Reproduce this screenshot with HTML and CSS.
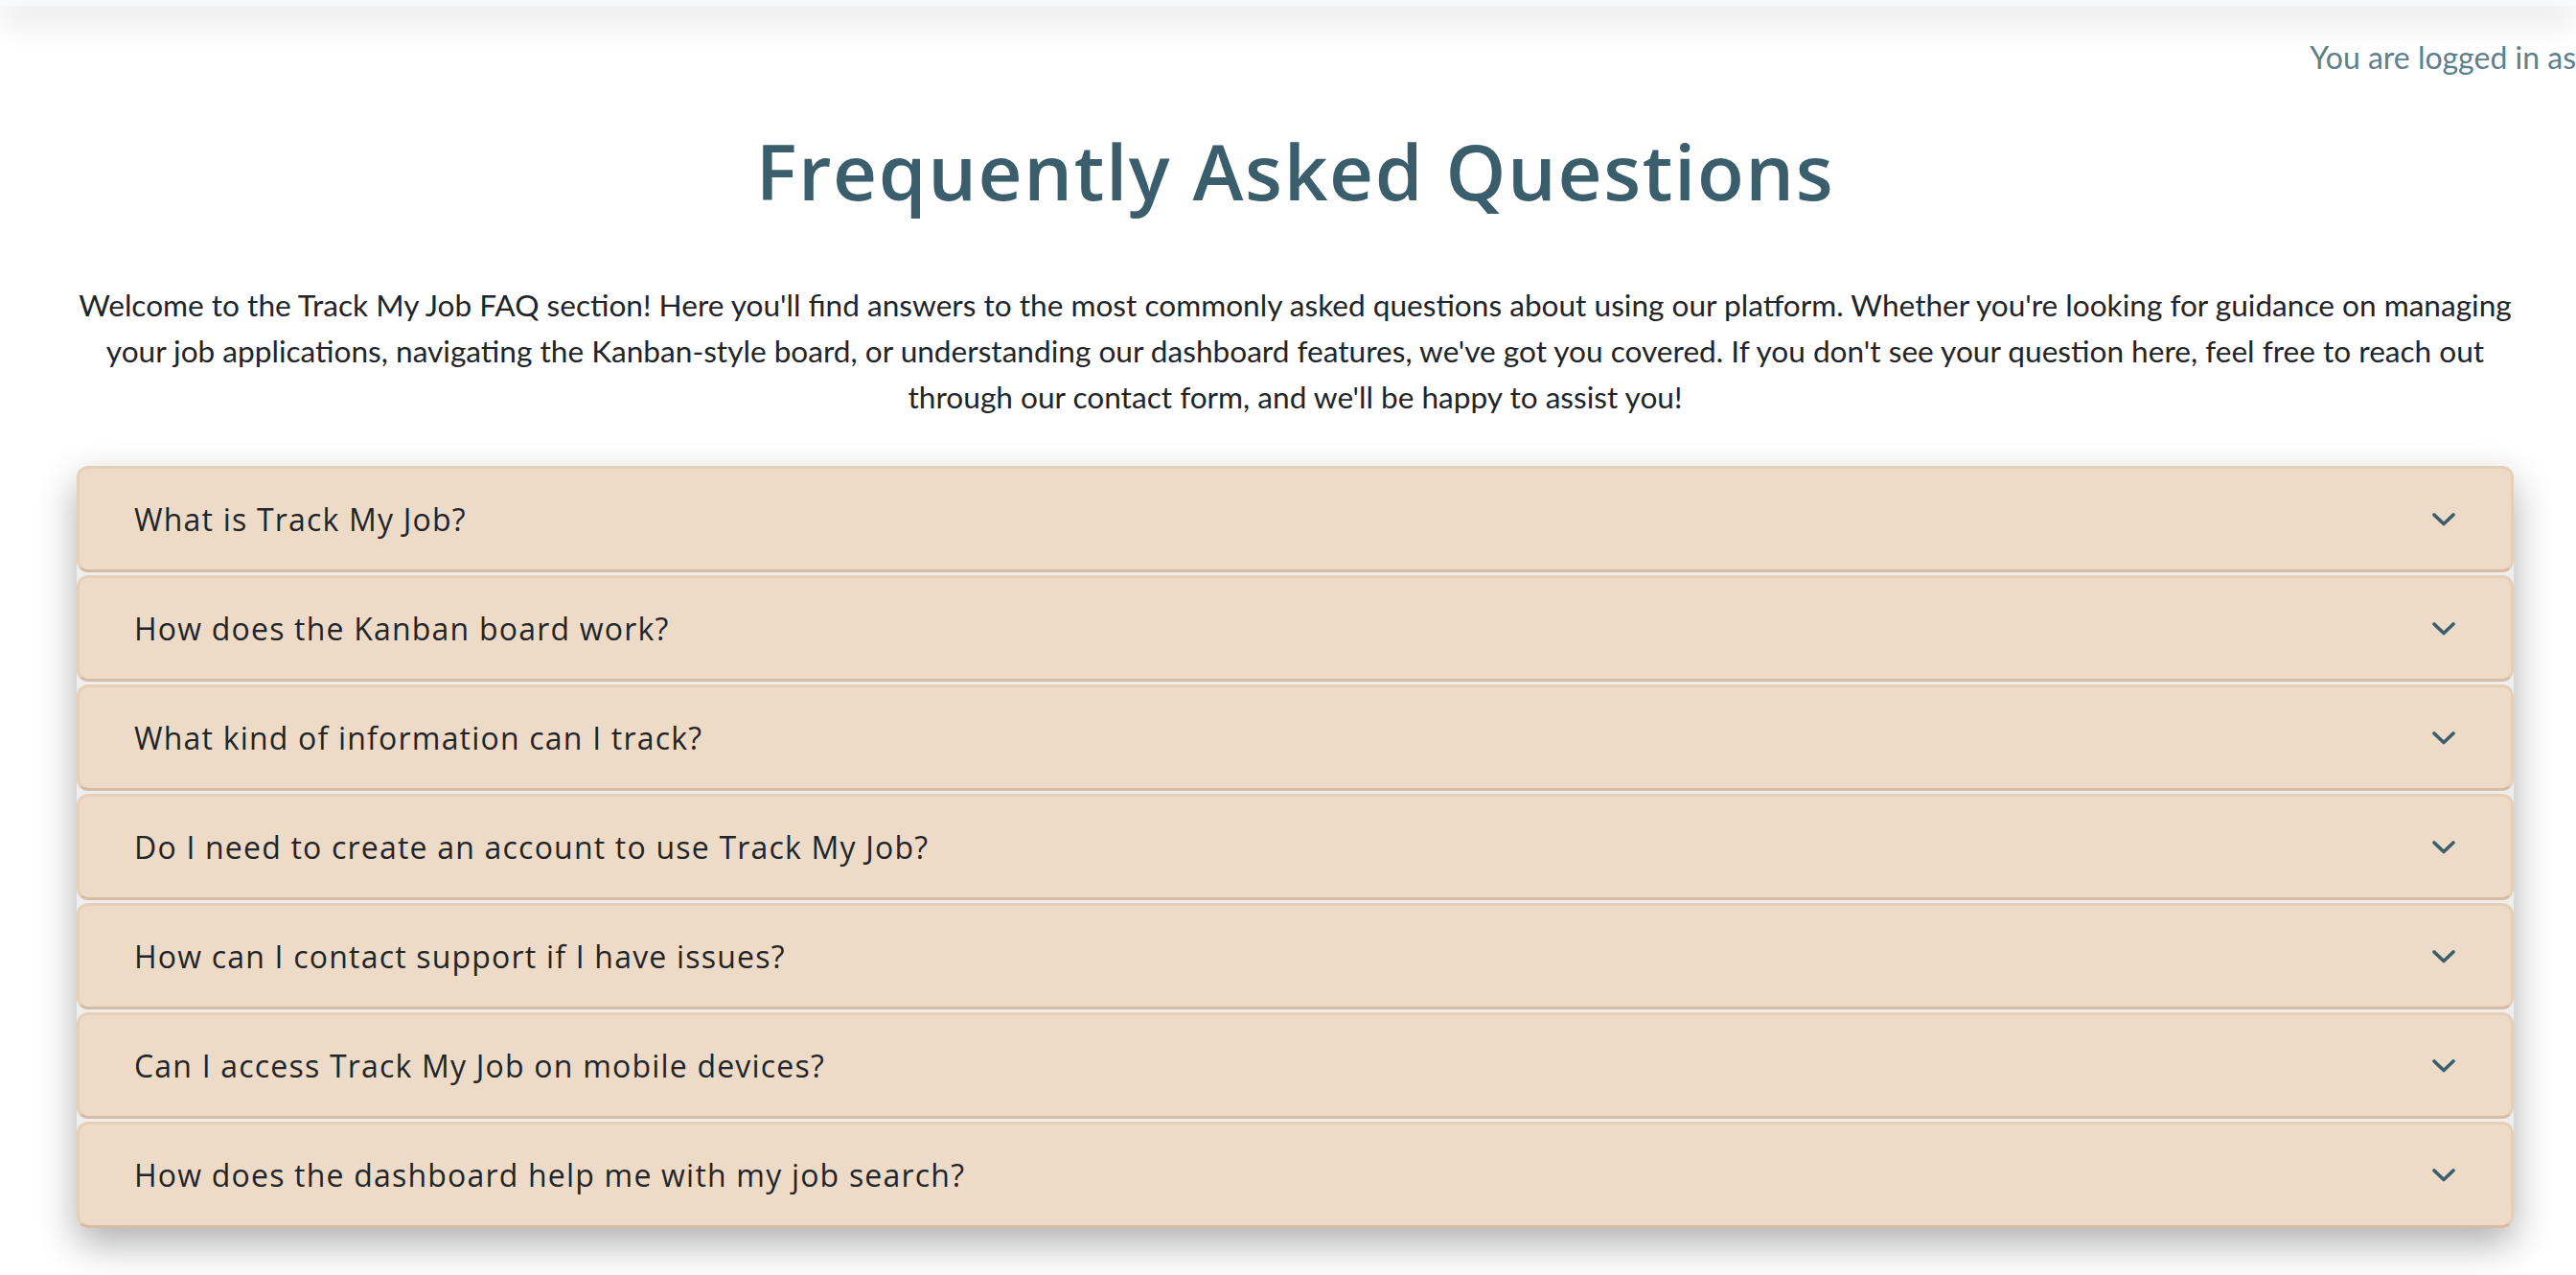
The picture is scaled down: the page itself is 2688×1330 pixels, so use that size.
FILE: index.html
```html
<!DOCTYPE html>
<html lang="en">
<head>
<meta charset="utf-8">
<title>FAQ - Track My Job</title>
<link rel="stylesheet" href="styles.css">
</head>
<body>
<nav class="topbar"></nav>
<div class="login-row"><span class="login-text">You are logged in as</span></div>
<main class="container">
  <h1 class="title">Frequently Asked Questions</h1>
  <p class="intro">Welcome to the Track My Job FAQ section! Here you'll find answers to the most commonly asked questions about using our platform. Whether you're looking for guidance on managing your job applications, navigating the Kanban-style board, or understanding our dashboard features, we've got you covered. If you don't see your question here, feel free to reach out through our contact form, and we'll be happy to assist you!</p>
  <div class="accordion">
    <div class="item"><span class="q">What is Track My Job?</span><svg class="chev" viewBox="0 0 24 14"><path d="M2 2 L12 11.5 L22 2"/></svg></div>
    <div class="item"><span class="q">How does the Kanban board work?</span><svg class="chev" viewBox="0 0 24 14"><path d="M2 2 L12 11.5 L22 2"/></svg></div>
    <div class="item"><span class="q">What kind of information can I track?</span><svg class="chev" viewBox="0 0 24 14"><path d="M2 2 L12 11.5 L22 2"/></svg></div>
    <div class="item"><span class="q">Do I need to create an account to use Track My Job?</span><svg class="chev" viewBox="0 0 24 14"><path d="M2 2 L12 11.5 L22 2"/></svg></div>
    <div class="item"><span class="q">How can I contact support if I have issues?</span><svg class="chev" viewBox="0 0 24 14"><path d="M2 2 L12 11.5 L22 2"/></svg></div>
    <div class="item"><span class="q">Can I access Track My Job on mobile devices?</span><svg class="chev" viewBox="0 0 24 14"><path d="M2 2 L12 11.5 L22 2"/></svg></div>
    <div class="item"><span class="q">How does the dashboard help me with my job search?</span><svg class="chev" viewBox="0 0 24 14"><path d="M2 2 L12 11.5 L22 2"/></svg></div>
  </div>
</main>
</body>
</html>
```
FILE: styles.css
```css
* { box-sizing: border-box; }
html, body { margin: 0; padding: 0; }
body {
  background: #ffffff;
  font-family: "Lato", "Liberation Sans", sans-serif;
  color: #212529;
  overflow-x: hidden;
  padding-bottom: 60px;
}
.topbar {
  height: 6px;
  background: #f8f9fa;
  box-shadow: 0 8px 34px rgba(0, 0, 0, 0.4);
  position: relative;
  z-index: 1;
}
.login-row {
  display: flex;
  justify-content: flex-end;
  padding-top: 30px;
}
.login-text {
  white-space: nowrap;
  font-size: 32px;
  line-height: 48px;
  color: #5e7f8c;
}
.container {
  margin: 0 65px 0 80px;
}
.title {
  margin: 46px 0 0;
  text-align: center;
  font-family: "Open Sans", "Liberation Sans", sans-serif;
  font-weight: 600;
  font-size: 80px;
  line-height: 96px;
  letter-spacing: 1.6px;
  color: #3b5e6c;
}
.intro {
  margin: 68px -10px 0;
  text-align: center;
  font-size: 31.6px;
  line-height: 48px;
  color: #212529;
}
.accordion {
  margin-top: 48px;
  background: #eeeeee;
  border-radius: 12px;
  box-shadow: 0 16px 40px rgba(0, 0, 0, 0.32);
  display: flex;
  flex-direction: column;
  gap: 3px;
}
.item {
  height: 111px;
  display: flex;
  align-items: center;
  justify-content: space-between;
  padding: 0 58px 0 57px;
  background: #eedbc7;
  border: 3px solid #e6cfb6;
  border-bottom-color: #d6bca2;
  border-radius: 12px;
}
.q {
  font-family: "Open Sans", "Liberation Sans", sans-serif;
  font-weight: 500;
  font-size: 32px;
  letter-spacing: 1.2px;
  color: #212529;
}
.chev {
  width: 24px;
  height: 14px;
  fill: none;
  stroke: #3b5e6c;
  stroke-width: 3.6;
  stroke-linecap: round;
  stroke-linejoin: round;
}
```
